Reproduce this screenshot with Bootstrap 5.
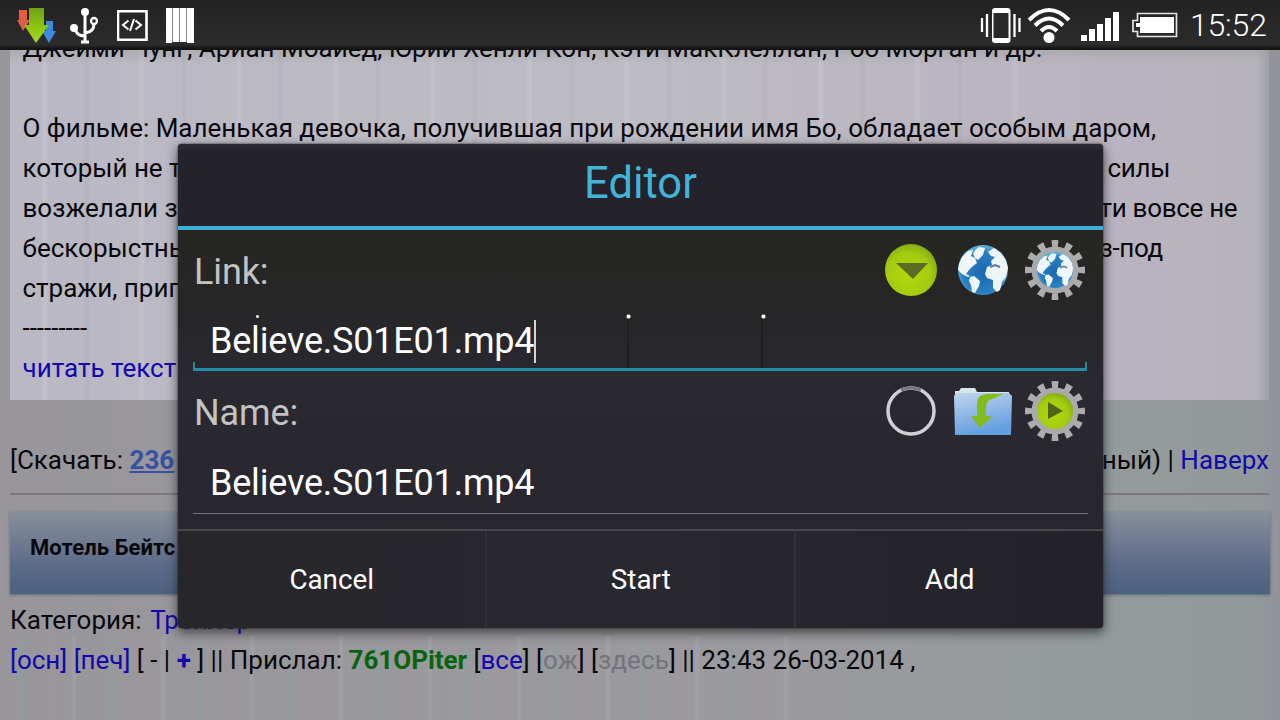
<!DOCTYPE html>
<html lang="ru">
  <head>
    <meta charset="utf-8" />
    <title>Editor</title>
    <link
      href="https://cdn.jsdelivr.net/npm/bootstrap@5.3.0/dist/css/bootstrap.min.css"
      rel="stylesheet"
    />
    <style>
      body {
        width: 1280px;
        height: 720px;
        font-family: Roboto, "Noto Sans", sans-serif;
        font-size: 26px;
        line-height: 40px;
        color: #08080c;
        background: linear-gradient(90deg, #98969b 0, #9b9a9f 60%, #949b9c 86%, #919a98 98%, #92929c 100%);
      }

      .status-bar {
        height: 50px;
        background: linear-gradient(#222 0, #2c2c2c 90%, #151515 96%);
        color: #fff;
        padding: 0 13px 0 17px;
      }

      .clock-text {
        font-size: 32px;
        font-weight: 300;
        width: 77px;
        letter-spacing: -0.2px;
        white-space: nowrap;
      }

      .page a {
        color: #1108ad;
        text-decoration: none;
      }

      .text-line {
        height: 40px;
        white-space: nowrap;
        display: grid;
        grid-template-columns: 1077px 1fr;
      }

      .story {
        height: 350px;
        margin: 0 11px 0 10px;
        padding-left: 12.5px;
        background:
          linear-gradient(rgba(160, 160, 160, 0.5), transparent 14px),
          linear-gradient(90deg, transparent 1247px, rgba(140, 140, 146, 0.5)),
          repeating-linear-gradient(90deg, transparent 0 31px, rgba(255, 255, 255, 0.1) 34px 36px, transparent 38px 73px, rgba(120, 115, 140, 0.07) 76px 78px, transparent 80px 97px) left top / 1040px 100% no-repeat,
          linear-gradient(90deg, #bab8c2, #bdbbc4 50%, #b9b3bf 90%, #b6b3ba);
      }

      .story .text-line:first-child {
        margin-top: -22px;
      }

      .tail-tight {
        letter-spacing: -0.3px;
      }

      .download-row {
        height: 95px;
        margin: 0 11px 0 10px;
        padding-top: 40px;
        border-bottom: 2px solid #7b787c;
      }

      .download-row .size-link {
        color: #3551a3;
        text-decoration: underline;
      }

      .title-bar {
        height: 82px;
        margin: 17px 10px 6px;
        padding: 16px 20px;
        font-size: 22px;
        font-weight: 700;
        letter-spacing: 0.1px;
        background: linear-gradient(#868f9b, #717c92 35%, #5b6b88 65%, #4c627f);
        box-shadow: 0 1px 3px #596779;
      }

      .meta-lines {
        height: 126px;
        padding-left: 10px;
        background:
          repeating-linear-gradient(90deg, transparent 0 17px, rgba(130, 165, 160, 0.28) 21px 23px, transparent 27px 44px, rgba(165, 145, 160, 0.25) 50px 56px, transparent 60px 71px, rgba(175, 180, 190, 0.25) 73px 75px, transparent 77px 89px) left bottom / 800px 90px no-repeat;
      }

      .meta-lines .user-name {
        color: #07640c;
        font-weight: 700;
      }

      .meta-lines .faded {
        color: #74757b;
        letter-spacing: 0.1px;
      }

      .dialog-box {
        left: 178px;
        top: 144px;
        width: 925px;
        height: 484px;
        color: #fff;
        background: #272629;
        border-radius: 4px;
        box-shadow: 0 4px 11px 1px rgba(30, 30, 34, 0.65), 0 0 2px #222;
      }

      .dialog-title {
        height: 86px;
        padding-bottom: 2px;
        font-size: 43.5px;
        color: #42b4d8;
        background: linear-gradient(#2d2d34, #24232b 10%);
        border-bottom: 4px solid #41b0d0;
        border-radius: 4px 4px 0 0;
      }

      .dialog-body {
        height: 299px;
        padding: 0 16px 0 15px;
        background: linear-gradient(#262722, #262627 25%, #2a2830 50%, #29272e);
      }

      .field-label {
        height: 80px;
        padding: 0 2px 0 1px;
        font-size: 36px;
        letter-spacing: -0.1px;
        color: #c3c3c3;
      }

      .field-icons {
        gap: 12px;
      }

      .field-input {
        font-size: 36px;
        letter-spacing: -0.2px;
        padding: 0 17px;
        height: 61px;
      }

      .field-input.active {
        padding-top: 4px;
        border-bottom: 3px solid #258ca7;
        background:
          linear-gradient(#258c8a, #258ca7) left bottom / 2px 6px no-repeat,
          linear-gradient(#258c8a, #258ca7) right bottom / 2px 6px no-repeat,
          radial-gradient(#e8e8e8 0 1px, transparent 2px) 62px 4px / 5px 5px no-repeat,
          radial-gradient(#fff 0 1.5px, transparent 2.5px) 433px 4px / 5px 5px no-repeat,
          radial-gradient(#fff 0 1.5px, transparent 2.5px) 568px 4px / 5px 5px no-repeat,
          linear-gradient(#222, #1b1a1e) 434px 9px / 2px 100% no-repeat,
          linear-gradient(#222, #1b1a1e) 568px 9px / 2px 100% no-repeat;
      }

      .field-input.idle {
        height: 63px;
        padding-top: 2px;
        margin-right: -1px;
        border-bottom: 1px solid #737178;
      }

      .caret {
        width: 1.5px;
        height: 43px;
        background: #d5d5d8;
      }

      .dialog-buttons {
        height: 99px;
        border-top: 2px solid #47464b;
        background: linear-gradient(90deg, #272629, #292730 45%, #242229);
        border-radius: 0 0 4px 4px;
      }

      .dialog-buttons button {
        border: 0;
        color: #fff;
        font-size: 27.8px;
        background: none;
      }

      .dialog-buttons button + button {
        border-left: 2px solid #323137;
      }
    </style>
  </head>
  <body class="overflow-hidden position-relative">
    <svg width="0" height="0" class="position-absolute">
      <defs>
        <radialGradient id="sea" cx=".5" cy=".55" r=".55">
          <stop offset="0" stop-color="#1c67ae" />
          <stop offset=".75" stop-color="#2a80c4" />
          <stop offset="1" stop-color="#65b7df" />
        </radialGradient>
        <radialGradient id="lime" cx=".45" cy=".6" r=".6">
          <stop offset="0" stop-color="#b4d80c" />
          <stop offset=".7" stop-color="#a3cc10" />
          <stop offset="1" stop-color="#89ad14" />
        </radialGradient>
        <linearGradient id="folder" x1="0" y1="0" x2=".3" y2="1">
          <stop offset="0" stop-color="#c0d5ed" />
          <stop offset="1" stop-color="#659ee0" />
        </linearGradient>
        <linearGradient id="red" x1="0" y1="0" x2="0" y2="1">
          <stop offset="0" stop-color="#ee5a3b" />
          <stop offset="1" stop-color="#cf6050" />
        </linearGradient>
        <linearGradient id="green" x1="0" y1="0" x2="0" y2="1">
          <stop offset="0" stop-color="#6ea21b" />
          <stop offset=".55" stop-color="#8cc60d" />
          <stop offset="1" stop-color="#a6d632" />
        </linearGradient>
        <g id="globe">
          <circle r="25" fill="url(#sea)" />
          <path fill="#eef6fa" d="M-24-6-21-13-15-19-10-20-12-14-8-12-6-7-10-4-14 0-17 4-13 6-15 7-21 4-25 0ZM-8-20-4-23 2-22 0-15-5-10-8-12-10-16ZM-13 7-9 6-3 11-4 16-8 23-11 22-12 15-14 11ZM8-14 5-18 11-22 18-17 23-10 25-2 23 7 19 12 17 20 14 22 10 18 10 10 4 8 2 4 4-3 9-5 8-9 12-13Z" />
          <path d="M7-3 12-5 17-3" fill="none" stroke="#5878a8" stroke-width="2" />
        </g>
        <g id="gear">
          <circle r="26" fill="none" stroke="#adadae" stroke-width="8" pathLength="24" stroke-dasharray=".94 1.06" stroke-dashoffset=".47" />
          <circle r="20" fill="none" stroke="#a9aaac" stroke-width="7" />
        </g>
      </defs>
    </svg>

    <!-- Status bar -->
    <header class="status-bar d-flex align-items-center">
      <svg width="53" height="50" viewBox="17 0 53 50">
        <path fill="url(#red)" d="M19 10h8v10h3l-7 11-6-11h2Z" />
        <path fill="#3d8be0" d="M46 21h7v10h3l-7 12-7-12h4Z" />
        <path fill="url(#green)" d="M29 8h15v17h5L36 43 24 25h5Z" />
      </svg>
      <svg width="47" height="50" viewBox="70 0 47 50">
        <g fill="none" stroke="#fff" stroke-width="3">
          <path d="M85 12v30M75 28q1 8 10 8M85 33q9-1 9-9" />
          <circle cx="94" cy="21" r="3" stroke-width="2.3" />
          <path d="M81 42h8" />
        </g>
        <circle cx="85" cy="12" r="4" fill="#fff" />
        <circle cx="74" cy="28" r="4" fill="#fff" />
      </svg>
      <svg width="49" height="50" viewBox="117 0 49 50">
        <path d="M118 11.300h28.500v28.500h-28.500Z" fill="none" stroke="#fff" stroke-width="2.600" />
        <path d="M128.500 20.500 123 25l5.500 4.500M135.500 20.500 141 25l-5.500 4.500M134 19l-4 12" fill="none" stroke="#fff" stroke-width="2" />
      </svg>
      <svg width="28" height="50" viewBox="166 0 28 50">
        <path fill="#fff" d="M166 8h6v35h-6ZM173 8h6v34h-6ZM180 8h6v34h-6ZM187 8h7v35h-7Z" />
        <path d="M172.500 8v34M179.500 8v34M186.500 8v34" stroke="#888" />
      </svg>
      <svg class="ms-auto" width="47" height="50" viewBox="980 0 47 50">
        <rect x="992" y="8" width="18.500" height="35" rx="3" fill="#fff" />
        <rect x="993.500" y="13" width="15" height="25" fill="#292929" />
        <path d="M982 18v14M987 14v23M1014.500 14v23M1019.500 18v14" stroke="#fff" stroke-width="2.300" />
      </svg>
      <svg width="54" height="50" viewBox="1027 0 54 50">
        <circle cx="1049" cy="37.500" r="5.500" fill="#fff" />
        <path d="M1029 20q20-20 40 0M1035 25.500q14-14 28 0M1041 31q8-8 16 0" fill="none" stroke="#fff" stroke-width="4" />
      </svg>
      <svg width="51" height="50" viewBox="1081 0 51 50">
        <path fill="#fff" d="M1081 35h6v6h-6ZM1089 29h6v12h-6ZM1097 24h6v17h-6ZM1105 18h6v23h-6ZM1113 12h6v29h-6Z" />
      </svg>
      <svg width="58" height="50" viewBox="1132 0 58 50">
        <path d="M1137.500 13.500h39v23h-39v-5h-4.500v-11h4.500Z" fill="none" stroke="#e3e3e3" stroke-width="1.700" />
        <path fill="#fff" d="M1140 17h34v16h-34v-6h-4v-4h4Z" />
      </svg>
      <span class="clock-text">15:52</span>
    </header>

    <!-- Page behind the dialog -->
    <main class="page">
      <section class="story overflow-hidden">
        <div class="text-line">Джейми Чунг, Ариан Моайед, Юрий Хенли-Кон, Кэти МакКлеллан, Роб Морган и др.</div>
        <div class="text-line"></div>
        <div class="text-line">О фильме: Маленькая девочка, получившая при рождении имя Бо, обладает особым даром,</div>
        <div class="text-line"><span>который не т</span><span class="ps-1 ms-1 tail-tight">силы</span></div>
        <div class="text-line"><span>возжелали з</span><span class="tail-tight">ти вовсе не</span></div>
        <div class="text-line"><span>бескорыстны</span><span class="tail-tight">з-под</span></div>
        <div class="text-line">стражи, приг</div>
        <div class="text-line">---------</div>
        <div class="text-line"><a href="#">читать текст</a></div>
      </section>

      <div class="download-row d-flex justify-content-between">
        <span>[Скачать: <a class="size-link fw-bold" href="#">236</a></span>
        <span>ный) | <a href="#">Наверх</a></span>
      </div>

      <div class="title-bar">Мотель Бейтс</div>

      <div class="meta-lines">
        <div class="text-line"><span>Категория:&#8202; <a href="#">Трейлер</a></span></div>
        <div class="text-line">
          <span><a href="#">[осн]</a> <a href="#">[печ]</a> [ - | <a href="#" class="fw-bold">+</a> ] || Прислал: <span class="user-name">761OPiter</span> [<a href="#">все</a>] [<span class="faded">ож</span>] [<span class="faded">здесь</span>] || 23:43 26-03-2014 ,</span>
        </div>
      </div>
    </main>

    <!-- Editor dialog -->
    <div class="dialog-box position-absolute" role="dialog">
      <div class="dialog-title d-flex justify-content-center align-items-center">Editor</div>
      <div class="dialog-body">
        <div class="field-label d-flex align-items-center">
          <span class="me-auto pt-1">Link:</span>
          <div class="field-icons d-flex">
            <svg width="60" height="60" viewBox="-30 -30 60 60">
              <circle r="26" fill="url(#lime)" />
              <path d="M-15-7h32L2 9Z" fill="#5c6c24" />
            </svg>
            <svg width="60" height="60" viewBox="-30 -30 60 60"><use href="#globe" /></svg>
            <svg width="60" height="60" viewBox="-30 -30 60 60">
              <use href="#gear" />
              <use href="#globe" transform="scale(.73)" />
            </svg>
          </div>
        </div>
        <div class="field-input active d-flex align-items-center"><span>Believe.S01E01.mp4</span><i class="caret"></i></div>
        <div class="field-label d-flex align-items-center">
          <span class="me-auto pt-1">Name:</span>
          <div class="field-icons d-flex">
            <svg width="60" height="60" viewBox="-30 -30 60 60">
              <circle r="23" fill="none" stroke="#d0d0d2" stroke-width="3.500" />
              <path d="M-10-21Q0-25 10-21" fill="none" stroke="#77767a" stroke-width="3" />
            </svg>
            <svg width="60" height="60" viewBox="-30 -30 60 60">
              <path d="M-28-20h4l2-3h14l2 4h32v41h-54Z" fill="#d9e6e9" />
              <path d="M-29-15-27-18H26l3 3-1 39h-56Z" fill="url(#folder)" />
              <path d="M20-17H4Q-6-17-6-7V5h-6L-3 17 10 5H3V-5Q3-11 12-13Z" fill="#83ba1c" />
            </svg>
            <svg width="60" height="60" viewBox="-30 -30 60 60">
              <use href="#gear" />
              <circle r="18" fill="url(#lime)" />
              <path d="M-7-9 8 0-7 8Z" fill="#4f6515" />
            </svg>
          </div>
        </div>
        <div class="field-input idle d-flex align-items-center"><span>Believe.S01E01.mp4</span></div>
      </div>
      <div class="dialog-buttons d-flex">
        <button class="w-100">Cancel</button>
        <button class="w-100">Start</button>
        <button class="w-100">Add</button>
      </div>
    </div>

    <script src="https://cdn.jsdelivr.net/npm/bootstrap@5.3.0/dist/js/bootstrap.bundle.min.js"></script>
  </body>
</html>
